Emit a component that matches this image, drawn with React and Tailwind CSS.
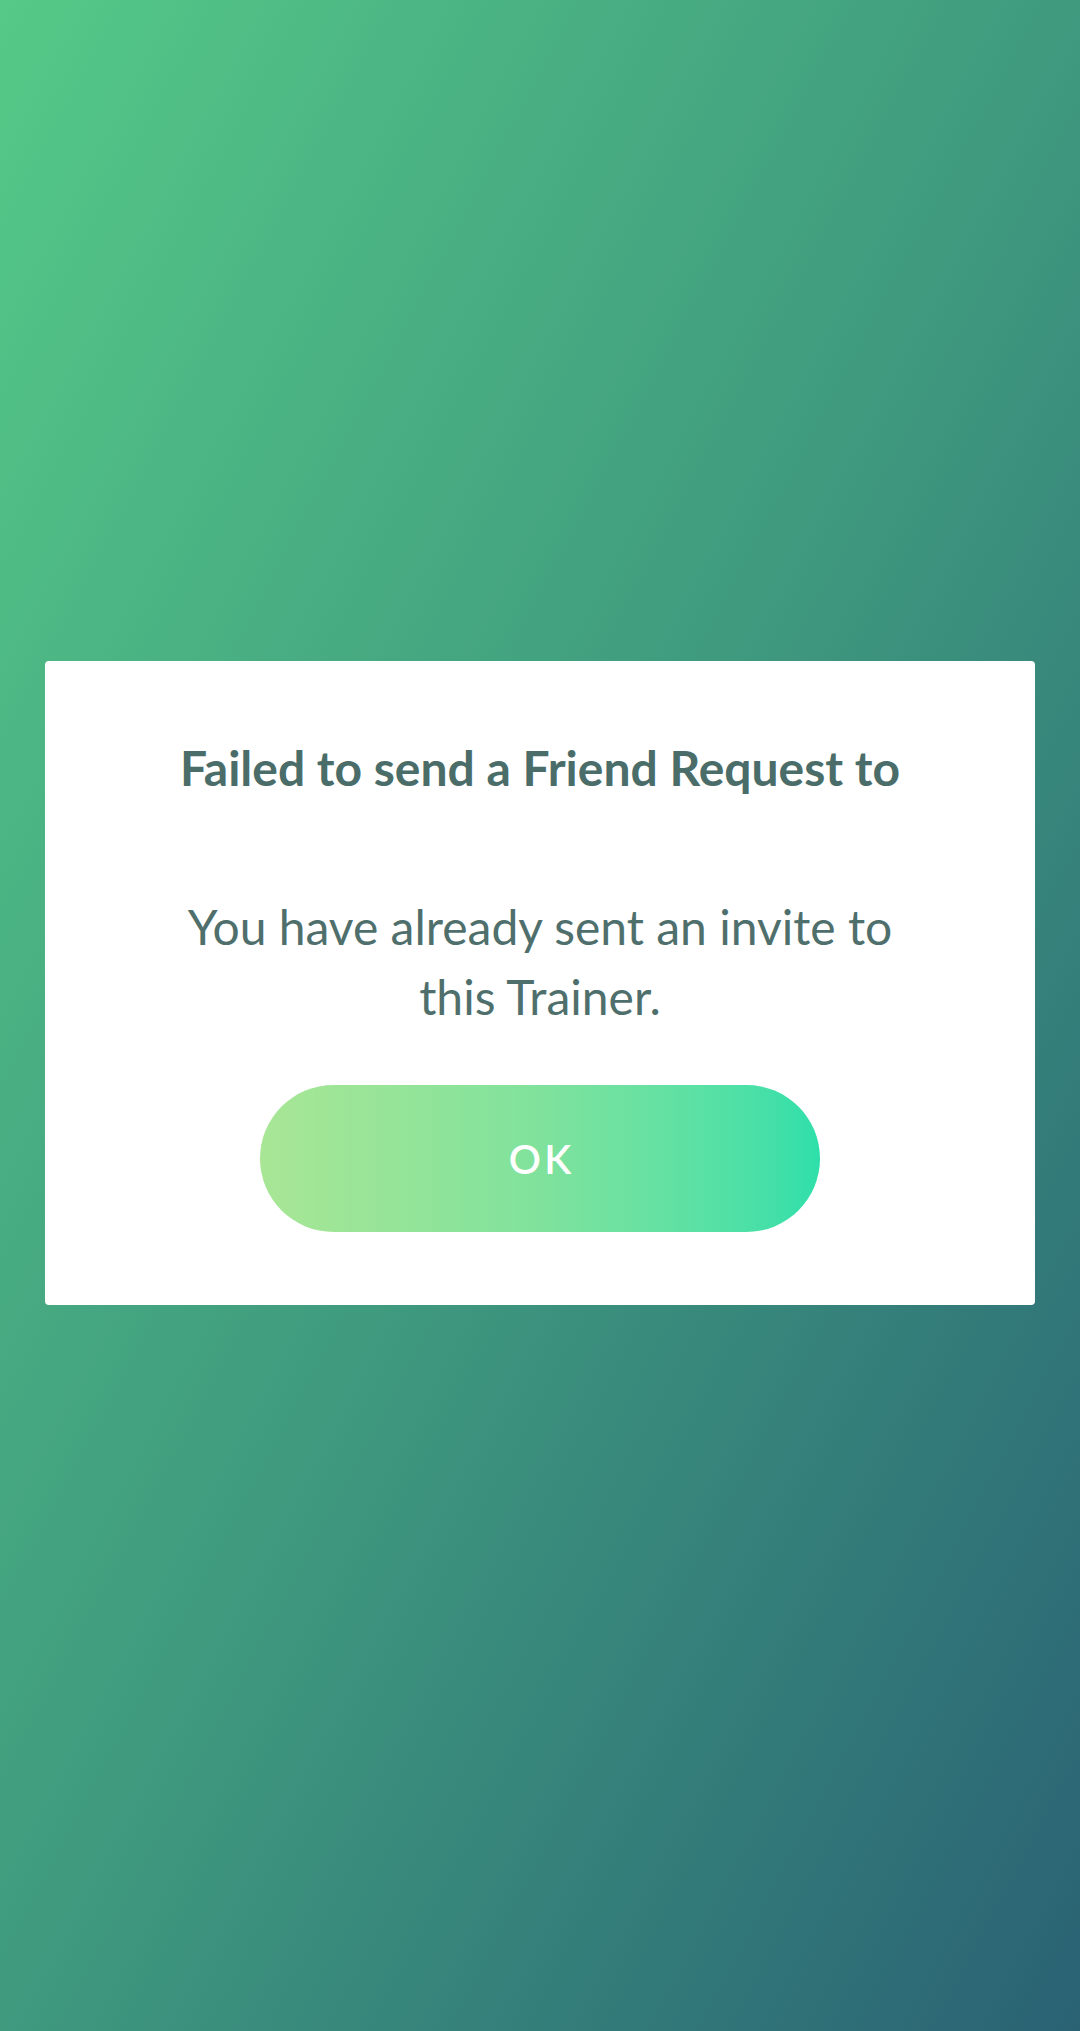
import React from 'react';

const font = { fontFamily: 'Lato, "Noto Sans", sans-serif' };

export default function App() {
  return (
    <div
      className="min-h-screen w-full bg-linear-to-br from-[#55c987] via-[#3f9a7e] to-[#2a6274] pt-[661px] pl-[45px] pr-[45px]"
      style={font}
    >
      {/* Error dialog */}
      <div className="w-[990px] h-[644px] bg-white rounded-[4px] flex flex-col items-center">
        <div className="pt-[83px] text-[48px] leading-[48px] font-bold text-[#4b6d6a] text-center">
          Failed to send a Friend Request to
        </div>
        <div className="mt-[100px] text-[48px] leading-[70px] text-[#4f6f6c] text-center w-[780px]">
          You have already sent an invite to this Trainer.
        </div>
        <button className="mt-[53px] w-[560px] h-[147px] rounded-full bg-linear-to-r from-[#a8e695] via-[#7fe29c] to-[#2edfaa] flex items-center justify-center">
          <span className="text-white text-[40px] font-semibold tracking-[0.08em] pl-[0.08em]">OK</span>
        </button>
      </div>
    </div>
  );
}
